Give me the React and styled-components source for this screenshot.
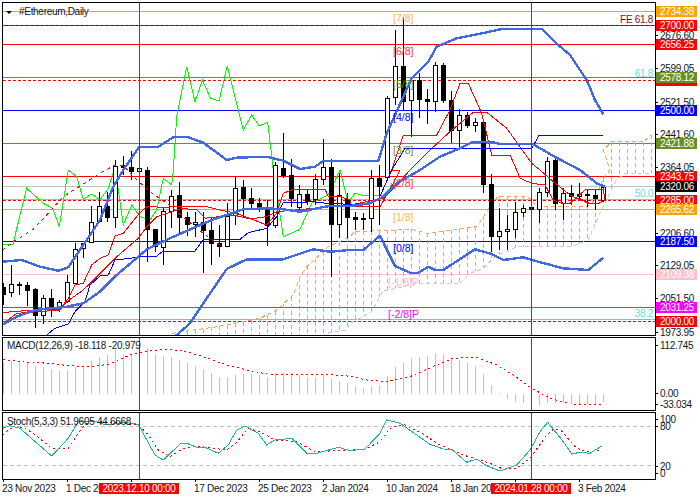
import React from 'react';
import styled, { createGlobalStyle } from 'styled-components';

const FONT = '"Liberation Sans", Arial, sans-serif';
const INK = '#101822';
const Global = createGlobalStyle`
  html, body { margin: 0; padding: 0; background: #fff; }
  #root { width: 700px; height: 500px; overflow: hidden; }
`;

const Terminal = styled.div`
  width: 700px; height: 500px; background: #fff;
  display: grid; grid-template-columns: 656px 44px; grid-template-rows: 480px 20px;
  font-family: ${FONT}; font-size: 10px; letter-spacing: -0.3px; color: ${INK}; overflow: hidden;
`;
const Panes = styled.div`
  display: flex; flex-direction: column; padding: 2px 0 0 2px; gap: 1px; box-sizing: border-box;
`;
const Pane = styled.div`
  position: relative; box-sizing: border-box; height: ${p => p.$h}px; flex: none;
  border: 1px solid #000; background: #fff; overflow: hidden;
`;
const Chart = styled.svg`
  display: block; width: 100%; height: 100%;
`;
const Legend = styled.div`
  position: absolute; left: ${p => p.$left}px; top: ${p => p.$top}px; white-space: nowrap;
  color: ${INK}; line-height: 11px;
`;
const Caret = styled.span`
  display: inline-block; width: 0; height: 0; margin-right: 7px; vertical-align: 1px;
  border-left: 3px solid transparent; border-right: 3px solid transparent; border-top: 3px solid #000;
`;
const Axis = styled.div`
  position: relative;
`;
const AxisText = styled.div`
  position: absolute; left: 4px; line-height: 11px; height: 11px; white-space: nowrap; color: ${INK};
  &::before { content: ''; position: absolute; left: -4px; top: 5px; width: 2px; height: 1px; background: #000; }
`;
const PriceTag = styled.div`
  position: absolute; left: 0; width: 41px; height: 11px; line-height: 11px; padding-left: 4px;
  box-sizing: border-box; background: ${p => p.$bg}; color: #fff; white-space: nowrap;
`;
const TimeAxis = styled.div`
  grid-column: 1 / 3; position: relative; display: flex; padding-left: 3px; align-items: flex-start;
`;
const TimeCell = styled.div`
  flex: none; width: 64px; height: 14px; position: relative; white-space: nowrap; padding-top: 3px; line-height: 11px;
  color: ${INK}; text-indent: -1px;
  &::before { content: ''; position: absolute; left: 0; top: 0; width: 1px; height: 2px; background: #000; }
`;
const TimeCursor = styled.div`
  position: absolute; top: 3px; width: 80px; height: 11px; line-height: 11px; text-align: center;
  background: #f00; color: #fff; white-space: nowrap;
`;
const ChartLabel = styled.text`
  font-family: ${FONT}; font-size: ${p => p.$size || 10}px; letter-spacing: ${p => p.$size ? 0 : -0.3}px; fill: ${p => p.$color};
`;

const seg = (ox, oy, pts) => pts.map(([x, y]) => [ox + x / 3, oy + y / 3]);
const z1 = p => seg(0, 0, p), z2 = p => seg(350, 0, p), z3 = p => seg(0, 170, p);
const z4 = p => seg(350, 170, p), z5 = p => seg(0, 335, p), z6 = p => seg(350, 335, p);
const P = pts => pts.map(([x, y]) => `${x.toFixed(1)},${y.toFixed(1)}`).join(' ');

// type (w/b), bodyTop, bodyBottom, high, low
const candles = [
  ['b',287,295,283,305],['w',284,293,265,297],['b',284,286,282,295],['b',285,291,282,306],
  ['b',289,316,288,328],['w',298,316,295,324],['b',298,310,289,317],['w',302,307,300,312],
  ['w',282,302,275,303],['w',249,284,243,285],['w',243,249,243,258],['w',222,243,206,243],
  ['w',206,222,192,223],['b',206,218,192,222],['w',166,218,160,228],['b',165,168,156,175],
  ['b',167,172,151,180],['w',168,172,167,180],['b',170,230,167,262],['b',229,247,229,252],
  ['w',211,248,208,265],['w',196,212,190,228],['b',195,218,182,235],['b',217,225,212,236],
  ['w',222,225,212,237],['b',222,231,212,273],['b',230,244,217,265],['b',243,247,225,257],
  ['w',216,247,203,247],['w',188,216,177,225],['b',187,199,180,217],['b',198,204,188,210],
  ['b',203,207,198,212],['b',207,226,200,246],['w',165,226,162,228],['b',168,176,133,178],
  ['b',175,199,159,207],['w',194,208,185,212],['b',194,202,190,205],['w',179,200,174,205],
  ['w',167,180,139,185],['b',167,225,159,277],['w',195,225,173,238],['b',199,218,193,238],
  ['b',217,220,212,230],['b',218,220,213,230],['w',178,219,170,232],['b',178,187,165,225],
  ['w',98,178,96,180],['w',66,98,30,105],['b',66,102,17,110],['w',80,101,77,137],
  ['b',80,100,73,118],['b',99,102,89,124],['w',65,102,62,112],['b',65,101,63,103],
  ['b',100,131,91,143],['w',115,131,109,148],['b',115,126,112,128],['w',122,126,118,132],
  ['b',122,185,122,193],['b',184,237,174,252],['w',231,237,208,250],['w',229,232,215,250],
  ['w',212,230,202,238],['w',208,213,205,217],['b',207,210,205,212],['w',192,210,188,223],
  ['w',161,193,157,197],['b',160,204,157,210],['w',193,204,188,220],['b',193,197,185,205],
  ['w',194,197,183,200],['b',194,195,190,207],['b',195,199,190,210],['w',187,201,185,202],
];
const cx = i => 3.5 + 8 * i;

const upperBand = [...z3([[0,278],[8,275],[65,270],[120,290],[175,302],[205,292],[250,225],[300,150],[340,50],[370,0]]),
  ...z1([[418,440],[475,440],[520,412],[560,410],[610,428],[680,480],[710,473],[800,470],[850,482],[900,507],[945,500],[970,483],[1050,483]]),
  ...z2([[85,483],[110,400],[185,235],[235,185],[260,140],[320,115],[410,97],[460,86],[575,86],[625,135],[660,165],[710,240],[735,300],[760,343]])];
const midBand = [...z3([[0,468],[50,440],[105,420],[200,410],[250,400],[300,365],[350,315],[415,260],[440,238],[510,205],[600,165],[650,145],[730,118],[800,115],[850,118],[900,125],[950,115],[990,107],[1050,108]]),
  ...z4([[60,100],[100,80],[140,40],[210,0]]),
  ...z2([[270,470],[330,445],[370,425],[420,425],[450,432],[550,433],[610,468],[690,510]]),
  ...z4([[740,40],[765,50]])];
const lowBand = [...z3([[515,510],[530,495],[570,460],[610,400],[680,297],[740,268],[850,268],[940,238],[990,245],[1050,240]]),
  ...z4([[40,240],[90,197],[135,288],[180,308],[205,308],[235,290],[255,300],[280,300],[375,238],[425,252],[460,270],[520,262],[570,277],[640,295],[715,300],[760,263]])];

const green = [...z3([[0,218],[8,222],[38,225],[80,55],[130,100],[158,115],[178,170],[205,0],[230,20],[250,88],[275,72],[300,90],[325,55],[345,-10],[370,165],[395,105],[420,140],[450,150],[470,120],[490,25],[515,45],[520,0]]),
  ...z1([[530,350],[560,200],[585,305],[607,240],[632,295],[657,303],[682,197],[730,390],[755,345],[778,378],[803,367],[820,510]]),
  ...z3([[850,200],[900,178],[935,100],[985,75],[1020,0],[1045,100]]),
  ...z4([[0,90],[15,70],[45,78],[100,75],[120,55],[125,40]])];
const redA = [...z3([[0,428],[100,420],[180,418],[205,385],[225,345],[250,340],[275,285],[300,265],[325,255],[345,198],[370,190],[418,130],[440,110],[500,112],[545,108],[620,110],[660,120],[710,130],[800,165],[830,130],[850,70],[880,58],[975,58],[985,80],[1020,80],[1050,90]]),
  ...z4([[0,110],[90,110],[130,40],[150,0]]),
  ...z2([[125,510],[160,405],[260,405],[300,330],[330,250],[355,250],[395,340],[425,465],[480,465],[500,510]]),
  ...z4([[510,25],[545,40],[585,45],[610,90],[640,100],[660,100],[705,60],[760,57],[765,90],[740,102],[712,100],[690,85]])];
const redB = [...z3([[8,462],[50,430],[180,420],[200,395],[250,360],[290,320],[350,260],[415,205],[440,170],[470,140],[545,115],[590,120],[615,145],[700,135],[750,147],[800,140],[830,125],[1050,105]]),
  ...z4([[100,85],[135,50],[180,0]]),
  ...z2([[180,510],[240,450],[300,395],[370,337],[410,337],[470,385],[545,490]]),
  ...z4([[570,0],[610,35],[660,75],[680,85],[720,100],[750,102]])];
const redDash = [...z3([[8,240],[40,215],[100,178],[190,80],[300,10],[345,-15],[370,-15],[400,20],[450,65],[500,100],[560,150],[610,190],[660,228]])];
const blueThin = [...z3([[140,495],[165,475],[205,462],[225,425],[255,395],[270,345],[300,318],[325,315],[345,270],[415,262],[440,258],[470,258],[490,243],[585,243],[610,208],[720,208],[745,188],[800,175],[830,140],[850,97],[910,97],[940,95],[980,100],[1050,103]]),
  ...z4([[60,100],[85,90],[125,0]]),
  ...z2([[125,510],[165,445],[545,445],[568,405],[760,405]])];

const cloudUp = [...z3([[515,490],[650,470],[780,445],[830,420],[880,375],[900,320],[920,290],[965,250],[985,230],[1050,200]]),
  ...z4([[15,183],[65,183],[185,178],[230,190],[310,180],[380,170],[420,110],[445,78],[530,78],[545,90],[560,110],[710,110],[735,90],[760,25],[780,0]]),
  ...z2([[760,450],[785,425],[880,425],[905,405]])];
const cloudLow = [...z3([[515,560],[900,540],[980,490],[1040,480]]),
  ...z4([[0,460],[65,425],[100,360],[115,360],[205,340],[330,340],[360,310],[400,295],[440,255],[470,245],[500,230],[665,230],[715,210],[745,140],[800,30],[825,10],[905,10]])];
const interp = (pts, x) => {
  for (let i = 1; i < pts.length; i++) {
    if (x <= pts[i][0]) {
      const [a, b] = pts[i - 1]; const [c, d] = pts[i];
      return c === a ? d : b + (d - b) * (x - a) / (c - a);
    }
  }
  return pts[pts.length - 1][1];
};
const hatch = [];
for (let i = 22; cx(i) < 653; i++) hatch.push([cx(i), interp(cloudUp, cx(i)), interp(cloudLow, cx(i))]);

const hlines = [
  [11.5,'#ffa500'],[44.5,'#f00'],[77.5,'#6b8e23'],[110.5,'#00f'],[143.5,'#6b8e23'],[176.5,'#f00'],
  [186.5,'#c0c0c0'],[199.5,'#70d0c8'],[209.5,'#ffa500'],[241.5,'#00f'],[274.5,'#ffc0cb'],[307.5,'#f0f'],[319.5,'#70c8c0'],
];
const dashed = [25.5, 80.5, 200.5, 321.5];

const murrey = [
  ['[7/8]',393,22,'#ffb450'],['[6/8]',393,55,'#f33'],['[5/8]',393,88,'#6b8e23'],['[4/8]',393,121,'#00f'],
  ['[3/8]',393,154,'#6b8e23'],['[2/8]',393,187,'#f33'],['[1/8]',393,221,'#ffb450'],['[0/8]',393,252,'#00f'],
  ['[-1/8]P',388,286,'#ffc0cb'],['[-2/8]P',388,318,'#f0f'],
];

const macdTopsLeft = [80,78,80,82,92,95,102,108,105,95,92,78,65,60,45,60,60,50,40,57,62,67,75,85,93,102,113,125,125,120,118,118,120,125,115,115,115,120,125,125,118,132,138,145];
const macdEnds = [152,158,152,150,123,97,83,68,65,62,55,57,70,75,85,93,117,150,175,193,200,205,null,213,203,203,205,207,207,207,207,200];
const macdSignal = [...z5([[8,73],[60,80],[100,83],[160,85],[200,92],[270,95],[330,87],[390,60],[440,48],[500,43],[550,47],[610,65],[680,90],[740,105],[800,117],[980,118],[1050,124]]),
  ...z6([[50,135],[110,140],[180,125],[260,90],[310,70],[380,67],[440,90],[500,127],[545,160],[600,190],[660,207],[760,208]])];
const stochMain = [...z5([[8,280],[30,272],[60,280],[100,315],[155,363],[205,310],[235,260],[280,258],[320,270],[370,262],[415,268],[465,360],[490,375],[540,327],[560,325],[590,337],[615,337],[655,355],[685,330],[710,285],[735,273],[775,295],[800,330],[825,315],[875,310],[920,355],[950,355],[1015,337],[1050,347]]),
  ...z6([[45,342],[90,295],[110,255],[150,265],[200,300],[240,328],[280,342],[305,343],[350,382],[380,372],[410,392],[450,408],[500,390],[540,345],[570,290],[593,262],[640,320],[665,357],[690,352],[720,355],[755,333]])];
const stochSig = [...z5([[8,300],[30,280],[70,277],[100,295],[155,340],[205,340],[245,280],[270,258],[330,262],[415,270],[445,300],[475,345],[510,365],[550,340],[590,333],[640,340],[680,345],[710,322],[745,280],[780,290],[825,315],[890,320],[945,350],[1050,345]]),
  ...z6([[45,343],[90,320],[120,280],[160,268],[215,295],[270,330],[340,360],[420,385],[460,403],[500,400],[540,370],[590,300],[610,283],[630,283],[680,340],[720,352],[755,345]])];

const axisPlain = [[2676.60,35],[2599.05,68],[2521.50,102],[2441.60,134],[2364.05,167],[2206.60,233],[2129.05,265],[2051.50,298],[1973.95,332]];
const axisSub = [['112.745',345],['0.00',393],['-33.034',404],['100',419],['80',426],['20',466],['0',473]];
const tags = [
  ['2734.38',11,'#ffa500'],['2700.00',25,'#f00'],['2656.25',44,'#f00'],['',80,'#f00'],['2578.12',77,'#6b8e23'],
  ['2500.00',110,'#00f'],['2421.88',143,'#6b8e23'],['2343.75',176,'#f00'],['2320.06',186,'#000'],
  ['2285.00',200,'#f00'],['2265.62',209,'#ffa500'],['2187.50',241,'#00f'],['2109.38',274,'#ffc0cb'],
  ['2031.25',307,'#f0f'],['2000.00',321,'#f00'],
];
const times = ['23 Nov 2023','1 Dec 2023','','17 Dec 2023','25 Dec 2023','2 Jan 2024','10 Jan 2024','18 Jan 2024','','3 Feb 2024'];

const Cursors = ({ top, bottom }) => (
  <g shapeRendering="crispEdges">
    <line x1="139.5" x2="139.5" y1={top} y2={bottom} stroke="#f00" />
    <line x1="531.5" x2="531.5" y1={top} y2={bottom} stroke="#f00" />
  </g>
);

export default function App() {
  return (
    <Terminal>
      <Global />
      <Panes>
        <Pane $h={334}>
          <Chart viewBox="3 3 652 332" preserveAspectRatio="none">
            <g shapeRendering="crispEdges">
              {hlines.map(([y, c]) => <line key={y} x1="3" x2="655" y1={y} y2={y} stroke={c} />)}
              <line x1="3" x2="655" y1="25.5" y2="25.5" stroke="#400" />
              {dashed.map(y => <line key={y} x1="3" x2="655" y1={y} y2={y} stroke="#f00" strokeDasharray="3 2" />)}
              {hatch.map(([x, a, b]) => <line key={x} x1={x} x2={x} y1={a} y2={b} stroke="#f4a460" strokeDasharray="4 3" />)}
              <polyline points={P(cloudLow)} fill="none" stroke="#d8bfd8" strokeDasharray="4 3" />
              <polyline points={P(cloudUp)} fill="none" stroke="#f4a460" strokeDasharray="4 3" />
              <polyline points={P(green)} fill="none" stroke="#0f0" />
              {candles.map(([t, a, b, h, l], i) => (
                <g key={i}>
                  <line x1={cx(i)} x2={cx(i)} y1={h} y2={l} stroke="#000" />
                  {t === 'b'
                    ? <rect x={cx(i) - 2.5} y={a} width="5" height={Math.max(b - a, 2)} fill="#000" />
                    : <rect x={cx(i) - 2} y={a + 0.5} width="4" height={Math.max(b - a - 1, 1)} fill="#fff" stroke="#000" />}
                </g>
              ))}
              <polyline points={P(redDash)} fill="none" stroke="#f00" strokeDasharray="3 4" />
              <polyline points={P(redA)} fill="none" stroke="#f00" />
              <polyline points={P(redB)} fill="none" stroke="#f00" />
              <polyline points={P(blueThin)} fill="none" stroke="#00f" />
              <g fill="none" stroke="#4169e1" strokeWidth="2.4" strokeLinejoin="round">
                <polyline points={P(upperBand)} />
                <polyline points={P(midBand)} />
                <polyline points={P(lowBand)} />
              </g>
            </g>
            <Cursors top={3} bottom={335} />
            {murrey.map(([t, x, y, c]) => <ChartLabel key={t} x={x} y={y} $color={c} $size={10.5}>{t}</ChartLabel>)}
            <ChartLabel x="653" y="23" textAnchor="end" $color="#7a1020">FE 61.8</ChartLabel>
            <ChartLabel x="653" y="77" textAnchor="end" $color="#66e0dc">61.8</ChartLabel>
            <ChartLabel x="653" y="197" textAnchor="end" $color="#66e0dc">50.0</ChartLabel>
            <ChartLabel x="653" y="317" textAnchor="end" $color="#66e0dc">38.2</ChartLabel>
          </Chart>
          <Legend $left={3} $top={3}><Caret />#Ethereum,Daily</Legend>
        </Pane>
        <Pane $h={74}>
          <Chart viewBox="3 338 652 72" preserveAspectRatio="none">
            <g shapeRendering="crispEdges">
              {macdTopsLeft.map((t, i) => <line key={i} x1={cx(i)} x2={cx(i)} y1={335 + t / 3} y2="394" stroke="#c0c0c0" />)}
              {macdEnds.map((t, i) => t === null ? null : (
                <line key={i} x1={cx(i + 44)} x2={cx(i + 44)} y1={i < 19 ? 335 + t / 3 : 394} y2={i < 19 ? 394 : 335 + t / 3} stroke="#c0c0c0" />
              ))}
              <polyline points={P(macdSignal)} fill="none" stroke="#f00" strokeDasharray="2 3" />
            </g>
            <Cursors top={338} bottom={410} />
          </Chart>
          <Legend $left={4} $top={2}>MACD(12,26,9) -18.118 -20.979</Legend>
        </Pane>
        <Pane $h={68}>
          <Chart viewBox="3 413 652 66" preserveAspectRatio="none">
            <g shapeRendering="crispEdges">
              <line x1="3" x2="655" y1="426.5" y2="426.5" stroke="#c0c0c0" strokeDasharray="4 3" />
              <line x1="3" x2="655" y1="465.5" y2="465.5" stroke="#c0c0c0" strokeDasharray="4 3" />
              <polyline points={P(stochSig)} fill="none" stroke="#f00" strokeDasharray="2 3" />
              <polyline points={P(stochMain)} fill="none" stroke="#20b2aa" />
            </g>
            <Cursors top={413} bottom={479} />
          </Chart>
          <Legend $left={4} $top={3}>Stoch(5,3,3) 51.9605 44.6668</Legend>
        </Pane>
      </Panes>
      <Axis>
        {axisPlain.map(([v, y]) => <AxisText key={v} style={{ top: y - 5 }}>{v.toFixed(2)}</AxisText>)}
        {axisSub.map(([v, y]) => <AxisText key={v} style={{ top: y - 5 }}>{v}</AxisText>)}
        {tags.map(([v, y, c]) => <PriceTag key={y} $bg={c} style={{ top: y - 5 }}>{v}</PriceTag>)}
      </Axis>
      <TimeAxis>
        {times.map((t, i) => <TimeCell key={i}>{t}</TimeCell>)}
        <TimeCursor style={{ left: 99 }}>2023.12.10 00:00</TimeCursor>
        <TimeCursor style={{ left: 491 }}>2024.01.28 00:00</TimeCursor>
      </TimeAxis>
    </Terminal>
  );
}
